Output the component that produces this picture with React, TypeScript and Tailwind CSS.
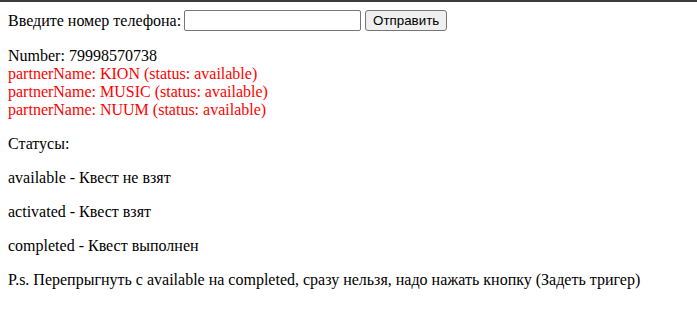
const partners = [
  { name: "KION", status: "available" },
  { name: "MUSIC", status: "available" },
  { name: "NUUM", status: "available" },
];

const statuses = [
  "available - Квест не взят",
  "activated - Квест взят",
  "completed - Квест выполнен",
];

export default function App() {
  return (
    <div className="min-h-screen bg-white font-['Liberation_Serif','Times_New_Roman',serif] text-base leading-[18px] text-black">
      <div className="h-[2px] bg-[#3b3b3b]" />
      <div className="px-2 pt-2">
        <div className="flex items-center">
          <span>Введите номер телефона:</span>
          <input
            type="text"
            className="ml-[3px] h-[21px] w-[177px] rounded-[2px] border border-[#767676] bg-white px-[2px] font-['Liberation_Sans',Arial,sans-serif] text-[13px] outline-none"
          />
          <button className="ml-[4px] h-[21px] w-[82px] rounded-[3px] border border-[#767676] bg-[#efefef] font-['Liberation_Sans',Arial,sans-serif] text-[13.33px] leading-none text-black">
            Отправить
          </button>
        </div>

        <div className="mt-4">
          <div>Number: 79998570738</div>
          {partners.map((p) => (
            <div key={p.name} className="text-[#ff0000]">
              partnerName: {p.name} (status: {p.status})
            </div>
          ))}
        </div>

        <p className="mt-4">Статусы:</p>
        {statuses.map((s) => (
          <p key={s} className="mt-4">
            {s}
          </p>
        ))}
        <p className="mt-4">
          P.s. Перепрыгнуть с available на completed, сразу нельзя, надо нажать
          кнопку (Задеть тригер)
        </p>
      </div>
    </div>
  );
}
